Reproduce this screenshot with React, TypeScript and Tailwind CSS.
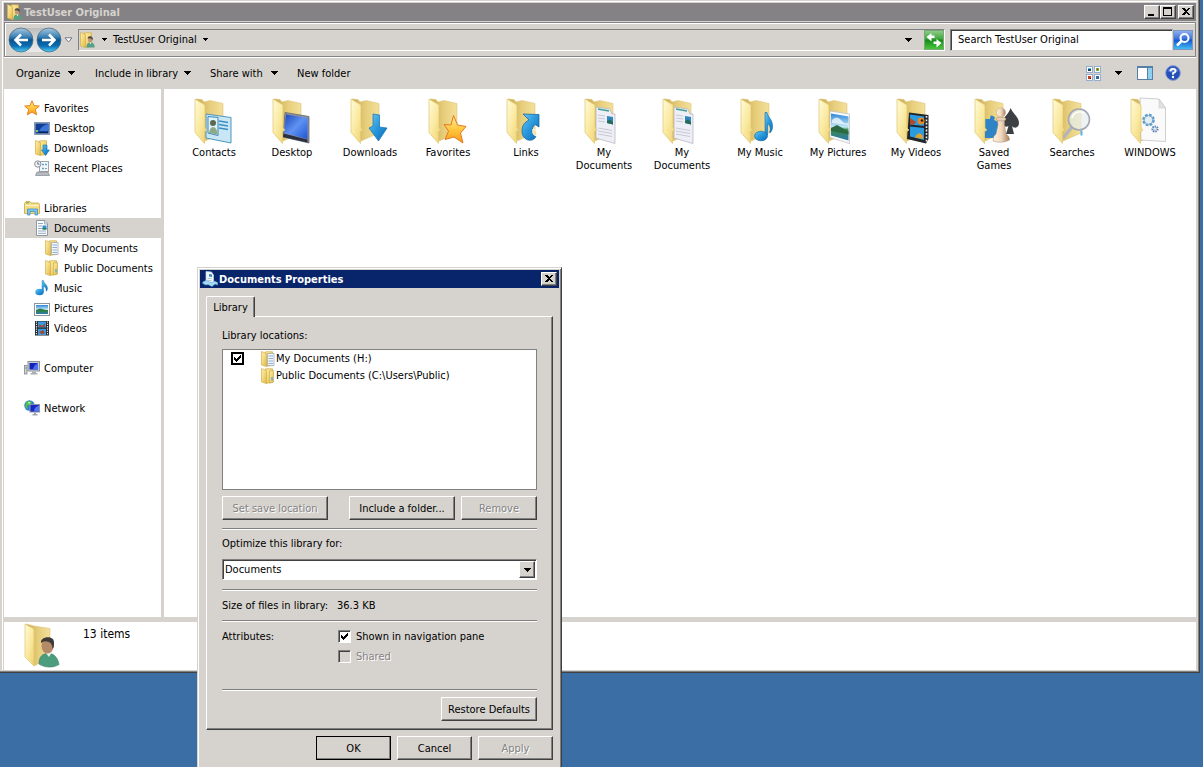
import { useState } from 'react';
import type { ReactNode } from 'react';
import clsx from 'clsx';

/* Gradients shared by all icons */
const IconDefs = () => (
  <svg className="absolute size-0" aria-hidden="true">
    <defs>
      <linearGradient id="flap" x1="0" y1="0" x2="1" y2="1">
        <stop offset="0" stopColor="#fffbd8" />
        <stop offset="0.5" stopColor="#fae9a0" />
        <stop offset="1" stopColor="#efcf6c" />
      </linearGradient>
      <linearGradient id="back" x1="0" y1="0" x2="1" y2="0">
        <stop offset="0" stopColor="#c9a94c" />
        <stop offset="0.5" stopColor="#e6cd7a" />
        <stop offset="1" stopColor="#f4e09a" />
      </linearGradient>
      <linearGradient id="mini" x1="0" y1="0" x2="1" y2="1">
        <stop offset="0" stopColor="#fdf0ae" />
        <stop offset="0.5" stopColor="#f3d77a" />
        <stop offset="1" stopColor="#dfb648" />
      </linearGradient>
      <linearGradient id="blue" x1="0" y1="0" x2="1" y2="1">
        <stop offset="0" stopColor="#6cc8f2" />
        <stop offset="0.5" stopColor="#2796db" />
        <stop offset="1" stopColor="#0f6ab5" />
      </linearGradient>
      <linearGradient id="screen" x1="0" y1="0" x2="1" y2="1">
        <stop offset="0" stopColor="#1c46b8" />
        <stop offset="0.5" stopColor="#5f92f2" />
        <stop offset="1" stopColor="#1d55d6" />
      </linearGradient>
      <linearGradient id="star" x1="0" y1="0" x2="0" y2="1">
        <stop offset="0" stopColor="#fff3a0" />
        <stop offset="0.5" stopColor="#ffc83e" />
        <stop offset="1" stopColor="#f79a1c" />
      </linearGradient>
      <linearGradient id="sky" x1="0" y1="0" x2="0" y2="1">
        <stop offset="0" stopColor="#2f86d8" />
        <stop offset="0.5" stopColor="#c6e8f6" />
        <stop offset="0.6" stopColor="#3c8a4a" />
        <stop offset="1" stopColor="#2a78ae" />
      </linearGradient>
      <linearGradient id="pawn" x1="0" y1="0" x2="1" y2="0">
        <stop offset="0" stopColor="#fff4e2" />
        <stop offset="0.5" stopColor="#f0d8bd" />
        <stop offset="1" stopColor="#a9805c" />
      </linearGradient>
      <linearGradient id="orb" x1="0" y1="0" x2="0" y2="1">
        <stop offset="0" stopColor="#a9c6dc" />
        <stop offset="0.35" stopColor="#3f86b8" />
        <stop offset="0.5" stopColor="#0a548f" />
        <stop offset="0.75" stopColor="#0b6fb4" />
        <stop offset="1" stopColor="#4fd0f4" />
      </linearGradient>
      <linearGradient id="green" x1="0" y1="0" x2="0" y2="1">
        <stop offset="0" stopColor="#8fce8a" />
        <stop offset="0.45" stopColor="#3fa53c" />
        <stop offset="0.5" stopColor="#148a18" />
        <stop offset="1" stopColor="#4fc83e" />
      </linearGradient>
      <linearGradient id="find" x1="0" y1="0" x2="0" y2="1">
        <stop offset="0" stopColor="#8fb4ee" />
        <stop offset="0.45" stopColor="#3a6fdc" />
        <stop offset="0.5" stopColor="#1455cf" />
        <stop offset="1" stopColor="#43c2f5" />
      </linearGradient>
      <linearGradient id="pill" x1="0" y1="0" x2="0" y2="1">
        <stop offset="0" stopColor="#bcbcbc" />
        <stop offset="0.5" stopColor="#d9d9d9" />
        <stop offset="1" stopColor="#e9e9e9" />
      </linearGradient>
    </defs>
  </svg>
);

const FolderIcon = ({ children }: { children?: ReactNode }) => (
  <svg viewBox="-1 -1 48 48" className="size-12 shrink-0 overflow-visible" aria-hidden="true">
    <path d="M5 2 L11 2.500 L13 5 L19 3.500 L32 6.500 V36 L14 44 Z" fill="url(#back)" stroke="#dcc478" strokeWidth=".6" />
    {children}
    <path d="M4 2 L14 8 V31 L16 33 L13.500 34.500 V46.500 L4 35.500 Z" fill="url(#flap)" stroke="#dfc574" strokeWidth=".7" />
  </svg>
);

const Small = ({ children }: { children: ReactNode }) => (
  <svg viewBox="0 0 16 16" className="size-4 shrink-0" aria-hidden="true">{children}</svg>
);

/* Overlays drawn inside the big folders */
const contacts = (
  <g>
    <path d="M15 17 L40 20.500 V46 L15 41 Z" fill="#c9e6f5" stroke="#4f96bd" />
    <path d="M17 19.500 L27 20.500 V38.500 L17 36 Z" fill="#dff2fa" stroke="#3a87b5" />
    <circle cx="22" cy="26" r="3" fill="#5b6a4a" />
    <path d="M18 36 Q19 30 22 30 Q26 30 26.500 37.500 Z" fill="#8fa886" />
    <path d="M28 24 L37 25.500 M28 27.500 L37 29 M28 31 L37 32.500" stroke="#3a8fc4" strokeWidth="1.400" />
  </g>
);

const desktop = (
  <g>
    <path d="M16 15.500 L40 19.500 V46 L14 40 Z" fill="#8e929c" stroke="#63666e" strokeWidth=".8" />
    <path d="M17 17.500 L38.500 21 V42 L15 36 Z" fill="url(#screen)" />
    <path d="M14.500 36.500 L38.500 42.500 V45.500 L14 40 Z" fill="#2b2f42" />
  </g>
);

const downloads = (
  <path d="M26 17 L32.500 18 V30 L40 31 L31.500 44 L22 31 L26 29 Z" fill="url(#blue)" stroke="#1273b8" strokeWidth=".7" />
);

const favorites = (
  <path d="M28.500 18.500 L32.500 28 L41 29.500 L35.500 36 L38 46 L29 40 L20 42.500 L23.500 34 L19 27.500 L26 28 Z" fill="url(#star)" stroke="#e5781b" />
);

const links = (
  <g>
    <path d="M20 17 L36 17.500 V30 L32 27.500 C28 31 28 37 33 39.500 C30 46 19 44 19 34 C19 28 22 25 26 23 Z" fill="url(#blue)" stroke="#0d5f9f" strokeWidth=".7" />
    <path d="M30 32 Q35 34 33.500 39 Q28.500 38 30 32 Z" fill="#f3e09a" stroke="#fff" strokeWidth=".8" />
  </g>
);

const documents = (
  <g>
    <path d="M15 10 L29 12 L31 17 H34 V46.500 L15 41 Z" fill="#eeeef6" stroke="#b0b0bd" strokeWidth=".7" />
    <path d="M17 12 L28 14" stroke="#3f9d90" strokeWidth="1.500" />
    <path d="M17 18 L24 19 M17 21 L24 22 M17 24 L24 25 M17 31 L31 33.500 M17 34 L31 36.500 M17 37 L31 39.500" stroke="#c9c9d6" />
    <path d="M26 19 L32 20 V27.500 L26 26 Z" fill="#2f86bf" />
    <path d="M26 24 L29 22.500 L32 25 V27.500 L26 26 Z" fill="#276b54" />
  </g>
);

const music = (
  <g fill="url(#blue)" stroke="#1168aa" strokeWidth=".6">
    <path d="M28 15.500 H30 C31 20.500 36 22.500 35.500 30.500 C35 34.500 33 36.500 32.500 35.500 C34.500 30.500 32 27.500 30.500 26.500 V38 H28 Z" />
    <ellipse cx="24" cy="39" rx="6.500" ry="4.800" />
  </g>
);

const pictures = (
  <g>
    <path d="M15 14 L34.500 17 V46.500 L15 40.500 Z" fill="#fafafa" stroke="#b9bec4" strokeWidth=".7" />
    <path d="M16 16.500 L33.500 19.500 V43.500 L16 38.500 Z" fill="url(#sky)" />
    <path d="M17 23 Q22 18 26 23 T33 26 V28 L17 26 Z" fill="#edf7fc" opacity=".8" />
    <path d="M16 31 L22 28 L33.500 34.500 V37.500 L16 34 Z" fill="#2b6a43" />
  </g>
);

const videos = (
  <g>
    <path d="M16 15.500 L35.500 18 V42 L33 46.500 L14 42 Z" fill="#20262a" />
    <path d="M17 17.500 L31 19.500 V29 L17 27.500 Z" fill="#2b9be0" />
    <path d="M17 29.500 L31 31 V43 L17 39.500 Z" fill="#2b9be0" />
    <circle cx="28" cy="24" r="3.500" fill="#e5892a" />
    <circle cx="29" cy="23.500" r="1.300" fill="#2d2413" />
    <path d="M17 21 L23 25 L21 27.500 H17 Z" fill="#b24a2a" />
    <path d="M22 40.500 Q26 33 30 39 V42 Z" fill="#e0a02f" />
    <path d="M33.500 19 V44.500" stroke="#e8eef0" strokeWidth="1.600" strokeDasharray="1.8 1.6" />
  </g>
);

const games = (
  <g>
    <path d="M14 22 H19 Q19 17 22 19 Q25 20 23 23 L28 25 V38 L22 41 H14 Z" fill="#2e84c4" />
    <path d="M39.500 11 C42 17 48 20 48 26 C48 31 43 32 41 29 L43 37 L35 37 L37.500 29 C34 31 31 28 32 24 C33 19 38 17 39.500 11 Z" fill="#3c3f44" />
    <path d="M26.500 23 H33.500 V28 L35 37 Q38.500 39 38.500 43 Q31 47 22 44 Q22 39 25 37 L27 28 Z" fill="url(#pawn)" stroke="#a5886d" strokeWidth=".5" />
    <ellipse cx="30" cy="22" rx="5" ry="2" fill="#e9cfb2" stroke="#a5886d" strokeWidth=".5" />
    <circle cx="30" cy="15.500" r="4.500" fill="url(#pawn)" stroke="#b89a7c" strokeWidth=".5" />
  </g>
);

const searches = (
  <g>
    <path d="M22.500 30.500 L15 40" stroke="#b2b5ba" strokeWidth="3.500" strokeLinecap="round" />
    <circle cx="30" cy="22.500" r="10.500" fill="#e6eef0" fillOpacity=".7" stroke="#a2a9b3" strokeWidth="1.600" />
    <path d="M23 21 A8 8 0 0 1 35 16" fill="none" stroke="#fff" strokeWidth="1.500" />
    <path d="M32.500 33.500 V38.500" stroke="#5fb2e6" strokeWidth="2" />
  </g>
);

const system = (
  <g>
    <path d="M13 1 L32 2 L38.500 11 V44.500 L14 43 Z" fill="#fafafa" stroke="#c3c3c6" strokeWidth=".8" />
    <path d="M32 2 V11 H38.500 Z" fill="#dfe2e5" stroke="#c3c3c6" strokeWidth=".5" />
    <circle cx="21.500" cy="23" r="5" fill="#e3edf4" stroke="#5f9bc8" strokeWidth="2.600" strokeDasharray="2.6 1.3" />
    <circle cx="21.500" cy="23" r="4.500" fill="none" stroke="#7aaacd" />
    <circle cx="28" cy="32" r="2.600" fill="#dbe6f0" stroke="#5a81b4" strokeWidth="2" strokeDasharray="1.4 .9" />
  </g>
);

const UserFolder = () => (
  <svg viewBox="0 0 44 48" className="h-12 w-11 shrink-0" aria-hidden="true">
    <path d="M5 2 L13 4 L29 6.500 V36 L13 44 Z" fill="url(#back)" stroke="#dcc478" strokeWidth=".6" />
    <path d="M4 2 L13 7 V44 L4 35 Z" fill="url(#flap)" stroke="#dfc574" strokeWidth=".7" />
    <path d="M18 42 C18 34 22 31.500 27 31.500 C33 31 37 36 38 42.500 C32 46 24 46 18 42 Z" fill="#4c9c7e" stroke="#347c62" strokeWidth=".6" />
    <path d="M24 30 L28 35 L31 30 Z" fill="#e9efe9" />
    <ellipse cx="26.500" cy="24" rx="6" ry="7.500" fill="#b58a66" />
    <path d="M20 21 C19 14 33 13 33 20 C33 24 33 26 31.500 27 C31.500 23 30 21 28 20 Q23 18 20 21 Z" fill="#3f3a38" />
  </svg>
);

/* 16px icons */
const MiniFolder = ({ children }: { children?: ReactNode }) => (
  <Small>
    <path d="M5.500 .8 H12.500 V14.500 L6 15.300 Z" fill="url(#mini)" stroke="#d0aa45" strokeWidth=".7" />
    {children}
    <path d="M1.500 .5 L6.500 2.500 V15.500 L1.500 14 Z" fill="url(#mini)" stroke="#d4b04a" strokeWidth=".7" />
  </Small>
);

const icons = {
  user: (
    <MiniFolder>
      <path d="M7.500 15.500 C7.500 11.500 9 10.500 11.500 10.500 C14.500 10.500 15.500 12.500 15.700 15.500 Z" fill="#54a085" />
      <ellipse cx="11.200" cy="7.600" rx="2.300" ry="3" fill="#c09a76" />
      <path d="M8.700 6.500 C8.500 3.500 14 3.500 13.800 7 L13 8.500 C13 7 12 6 8.700 6.500 Z" fill="#4a4643" />
      <path d="M10.500 10.500 L11.500 12.500 L12.500 10.500 Z" fill="#eef3ee" />
    </MiniFolder>
  ),
  star: (
    <Small>
      <path d="M8 .8 L10 5.600 L15.300 6 L11.300 9.500 L12.700 14.800 L8 12 L3.300 14.800 L4.700 9.500 L.7 6 L6 5.600 Z" fill="url(#star)" stroke="#e8801c" />
    </Small>
  ),
  desktop: (
    <Small>
      <rect x=".5" y="2.500" width="15" height="12" fill="#a3b7cf" stroke="#8a9cb4" />
      <rect x="1.500" y="3.500" width="13" height="10" fill="#123f94" />
      <path d="M5 11 Q8 5 14.500 4 V11 Z" fill="#3d74d8" />
      <path d="M2 10 H4 V12 H2 Z" fill="#7fd05a" />
      <path d="M5 12.500 H14" stroke="#0c2354" />
    </Small>
  ),
  downloads: (
    <MiniFolder>
      <path d="M9 5 H13 V10 H15.500 L11.500 15.500 L7.500 10 H9 Z" fill="url(#blue)" stroke="#1672b8" strokeWidth=".6" />
    </MiniFolder>
  ),
  recent: (
    <Small>
      <rect x="5.500" y="1.500" width="9" height="10" fill="#f4f6f8" stroke="#9fa5ad" />
      <path d="M8 4.500 H10 M11 4.500 H13 M8 8.500 H10" stroke="#55a7db" strokeWidth="1.500" />
      <path d="M11 8.500 H13" stroke="#8c95a0" />
      <path d="M3 12 H14 L15.500 15.500 H1.500 Z" fill="#b7bbc1" stroke="#858b93" strokeWidth=".7" />
      <circle cx="3.800" cy="4" r="3.200" fill="#eef1f4" stroke="#8a929c" />
      <path d="M3.800 2 V4.200 H5.500" fill="none" stroke="#4d5661" strokeWidth=".8" />
    </Small>
  ),
  libraries: (
    <Small>
      <path d="M.5 3.500 L2 1.500 H6 L7 3 H14.500 L15.500 4.500 V13.500 H.5 Z" fill="#f6dc85" stroke="#c9a548" strokeWidth=".8" />
      <path d="M1 5.500 H15" stroke="#fff6c8" />
      <path d="M2 2.800 H5" stroke="#53a650" />
      <path d="M3.500 15 V9 H13.500 V15 H11 V11.500 H6 V15 Z" fill="#7cc5ea" stroke="#3f93c4" strokeWidth=".8" />
    </Small>
  ),
  documents: (
    <Small>
      <path d="M2.500 .5 H11 L13.500 3.500 V15.500 H2.500 Z" fill="#fff" stroke="#8e98a5" />
      <path d="M10.500 .5 V4 H13.500" fill="#dde5ee" stroke="#8e98a5" strokeWidth=".7" />
      <path d="M4 3.500 H9 M4 6 H8 M4 8.500 H8 M4 11 H12 M4 13.300 H12" stroke="#93a7bf" />
      <rect x="8.500" y="5.500" width="4" height="4" fill="#2f8fd0" />
      <rect x="8.500" y="8" width="4" height="1.500" fill="#2f7d58" />
    </Small>
  ),
  myDocuments: (
    <MiniFolder>
      <path d="M7.500 2.500 H14 V14.500 H7.500 Z" fill="#f3f6fa" stroke="#96a2b2" strokeWidth=".7" />
      <path d="M8.500 5 H13 M8.500 7.500 H13 M8.500 10 H13 M8.500 12.500 H13" stroke="#87a5c8" strokeWidth=".9" />
    </MiniFolder>
  ),
  folder: (
    <MiniFolder>
      <path d="M9.500 3 L13.500 2.500 V14 L9.500 15 Z" fill="url(#mini)" stroke="#cfac48" strokeWidth=".7" />
      <path d="M12 9 V12.500" stroke="#58b0e0" strokeWidth="1.500" />
    </MiniFolder>
  ),
  music: (
    <Small>
      <path d="M8 .5 H9.500 C10 4 14 5 13.500 9 C13 11 12 11.500 12 11 C12.500 8 11 7 9.500 6.500 V12 H8 Z" fill="url(#blue)" stroke="#1b76b9" strokeWidth=".4" />
      <ellipse cx="5.500" cy="12" rx="4.200" ry="3.200" fill="url(#blue)" />
    </Small>
  ),
  pictures: (
    <Small>
      <rect x=".5" y="3.500" width="15" height="12" fill="#fff" stroke="#8d949c" />
      <rect x="2" y="5" width="12" height="9" fill="url(#sky)" />
      <path d="M2 10 L6 8.500 L14 10.500 V11.500 H2 Z" fill="#2c7c45" />
    </Small>
  ),
  videos: (
    <Small>
      <rect x="1" y="1" width="14" height="14.500" fill="#20262b" />
      <path d="M4 1.500 H12 V7.500 H4 Z M4 8.800 H12 V15 H4 Z" fill="#3e9ade" />
      <path d="M5 4 L8 6 L11 3 V7 H5 Z M5 12 L9 10 L11 13 L8 14.500 Z" fill="#a04a32" />
      <path d="M2.500 1.500 V15 M13.500 1.500 V15" stroke="#e6eef2" strokeWidth="1.200" strokeDasharray="1.3 1" />
    </Small>
  ),
  computer: (
    <Small>
      <rect x="4" y="1.500" width="11.500" height="9.500" fill="#c9ccd2" stroke="#8f949c" />
      <rect x="5.500" y="3" width="8.500" height="6.500" fill="#1424b8" />
      <path d="M9 9.500 Q9.500 5 14 3 V9.500 Z" fill="#4a6ff0" />
      <path d="M8 11.500 H12 V13 H13.500 V14.500 H6.500 V13 H8 Z" fill="#a9adb4" />
      <rect x=".5" y="5.500" width="2.500" height="8.500" fill="#cfd2d6" stroke="#83888f" strokeWidth=".8" />
      <path d="M1.200 8 H2.500" stroke="#3aa64a" />
    </Small>
  ),
  network: (
    <Small>
      <circle cx="5.500" cy="5.500" r="5.200" fill="#2a7fd4" />
      <path d="M2 2.500 Q5 0 8 2 L6 5 L3 5.500 L4 9 L1 7 Z" fill="#54c33f" />
      <path d="M4 2 L6.500 2.500 L5 4 Z" fill="#d9f3fb" />
      <rect x="6" y="4.500" width="9.500" height="7.500" fill="#1826c4" stroke="#8d93a1" />
      <path d="M10 11.500 Q10 7 15 5.500 V11.500 Z" fill="#4f78f3" />
      <path d="M10 12.500 H12 V14 H13.500 V15.500 H8.500 V14 H10 Z" fill="#a0a4ab" />
    </Small>
  ),
  properties: (
    <Small>
      <path d="M4 .5 L9.500 1 L11.500 4 V12 L4 11 Z" fill="#eef5fb" stroke="#c6d8e8" strokeWidth=".7" />
      <path d="M7 3 L10 3.500 V6 L7 5.500 Z" fill="#3a83bb" />
      <path d="M5.500 7.500 H9.500 M5.500 9.500 H9.500" stroke="#a8bdd3" strokeWidth=".8" />
      <path d="M.8 11 L4 9.500 L10 12 L12 10 L15.500 11.500 V14 L13 13 L10 15.500 L6 13.500 L4 14 L.8 12.500 Z" fill="#a9dbf5" stroke="#5ea8d4" strokeWidth=".6" />
    </Small>
  ),
};

const Arrow = ({ tiny }: { tiny?: boolean }) =>
  tiny ? (
    <svg viewBox="0 0 5 3" className="h-[3px] w-[5px] shrink-0" shapeRendering="crispEdges" aria-hidden="true">
      <path d="M0 0 H5 L3 3 H2 Z" fill="#000" />
    </svg>
  ) : (
    <svg viewBox="0 0 7 4" className="h-1 w-[7px] shrink-0" shapeRendering="crispEdges" aria-hidden="true">
      <path d="M0 0 H7 L4 4 H3 Z" fill="#000" />
    </svg>
  );

const tree: { label: string; icon: ReactNode; level: number; gap?: boolean; active?: boolean }[] = [
  { label: 'Favorites', icon: icons.star, level: 0 },
  { label: 'Desktop', icon: icons.desktop, level: 1 },
  { label: 'Downloads', icon: icons.downloads, level: 1 },
  { label: 'Recent Places', icon: icons.recent, level: 1 },
  { label: 'Libraries', icon: icons.libraries, level: 0, gap: true },
  { label: 'Documents', icon: icons.documents, level: 1, active: true },
  { label: 'My Documents', icon: icons.myDocuments, level: 2 },
  { label: 'Public Documents', icon: icons.folder, level: 2 },
  { label: 'Music', icon: icons.music, level: 1 },
  { label: 'Pictures', icon: icons.pictures, level: 1 },
  { label: 'Videos', icon: icons.videos, level: 1 },
  { label: 'Computer', icon: icons.computer, level: 0, gap: true },
  { label: 'Network', icon: icons.network, level: 0, gap: true },
];

const indents = ['pl-[19px]', 'pl-[29px]', 'pl-[39px]'];

const files = [
  { label: 'Contacts', art: contacts },
  { label: 'Desktop', art: desktop },
  { label: 'Downloads', art: downloads },
  { label: 'Favorites', art: favorites },
  { label: 'Links', art: links },
  { label: 'My Documents', art: documents },
  { label: 'My Documents', art: documents },
  { label: 'My Music', art: music },
  { label: 'My Pictures', art: pictures },
  { label: 'My Videos', art: videos },
  { label: 'Saved Games', art: games },
  { label: 'Searches', art: searches },
  { label: 'WINDOWS', art: system },
];

const raised =
  'border border-t-white border-l-white border-r-[#404040] border-b-[#404040] shadow-[inset_-1px_-1px_0_#808080] bg-[#d6d3ce]';

const CaptionButton = ({ label, children }: { label: string; children: ReactNode }) => (
  <button aria-label={label} className={clsx('flex h-[14px] w-4 items-center justify-center', raised)}>
    <svg viewBox="0 0 12 10" className="h-[10px] w-3" shapeRendering="crispEdges" aria-hidden="true">
      {children}
    </svg>
  </button>
);

const closeGlyph = <path d="M2 1 H4 L6 3 L8 1 H10 L7 4.500 L10 8 H8 L6 6 L4 8 H2 L5 4.500 Z" fill="#000" />;

const DialogButton = ({ children, disabled, primary, className }: { children: ReactNode; disabled?: boolean; primary?: boolean; className?: string }) => (
  <button
    disabled={disabled}
    className={clsx(
      'h-6 whitespace-nowrap',
      raised,
      primary && 'outline-1 -outline-offset-1 outline-black',
      disabled && 'text-[#848284] [text-shadow:1px_1px_0_#fff]',
      className,
    )}
  >
    {children}
  </button>
);

const Check = ({ id, checked, onChange, disabled, bold }: { id: string; checked: boolean; onChange?: () => void; disabled?: boolean; bold?: boolean }) => (
  <span className="grid size-[13px] shrink-0">
    <input
      id={id}
      type="checkbox"
      checked={checked}
      onChange={onChange}
      disabled={disabled}
      className={clsx(
        'col-start-1 row-start-1 size-[13px] appearance-none',
        bold
          ? 'border-2 border-black bg-white'
          : 'border border-t-[#808080] border-l-[#808080] border-r-white border-b-white shadow-[inset_1px_1px_0_#404040]',
        !bold && (disabled ? 'bg-[#d6d3ce]' : 'bg-white'),
      )}
    />
    {checked && (
      <svg viewBox="0 0 13 13" className="pointer-events-none col-start-1 row-start-1 size-[13px]" shapeRendering="crispEdges" aria-hidden="true">
        <path d="M3 5 L5 7 L10 3 V6 L5 10 L3 8 Z" fill="#000" />
      </svg>
    )}
  </span>
);

const Rule = () => <hr className="h-[2px] border-0 border-t border-b border-t-[#808080] border-b-white" />;

const PropertiesDialog = () => {
  const [shown, setShown] = useState(true);
  const [save, setSave] = useState(true);

  return (
    <div
      role="dialog"
      aria-label="Documents Properties"
      className="absolute top-[267px] left-[197px] flex w-[365px] flex-col border border-t-[#d6d3ce] border-l-[#d6d3ce] border-r-[#404040] border-b-[#404040] bg-[#d6d3ce] p-[2px] pb-4 shadow-[inset_1px_1px_0_#fff,inset_-1px_-1px_0_#808080]"
    >
      <div className="flex h-[18px] items-center bg-[#08246b] pr-[2px] pl-[2px] text-white">
        {icons.properties}
        <h2 className="flex-1 pl-[1px] text-[11px] font-bold">Documents Properties</h2>
        <CaptionButton label="Close">{closeGlyph}</CaptionButton>
      </div>

      <div className="flex flex-col px-[6px] pt-2">
        <div role="tablist" className="flex">
          <button
            role="tab"
            aria-selected="true"
            className="relative -mb-px h-[21px] w-[49px] rounded-t-[2px] border border-b-0 border-t-white border-l-white border-r-[#404040] bg-[#d6d3ce] shadow-[inset_-1px_0_0_#808080]"
          >
            Library
          </button>
        </div>

        <div className="flex flex-col border border-t-white border-l-white border-r-[#404040] border-b-[#404040] px-[15px] pt-3 pb-2 shadow-[inset_-1px_-1px_0_#808080]">
          <h3 className="leading-[14px]">Library locations:</h3>
          <ul className="mt-[6px] h-[141px] border border-[#808080] bg-white">
            <li className="flex h-[17px] items-center pl-2">
              <Check id="save" checked={save} onChange={() => setSave(!save)} bold />
              <label htmlFor="save" className="flex items-center pl-4">
                {icons.myDocuments} My Documents (H:)
              </label>
            </li>
            <li className="flex h-[17px] items-center pl-[37px]">
              {icons.folder} Public Documents (C:\Users\Public)
            </li>
          </ul>

          <div className="mt-[6px] flex">
            <DialogButton disabled className="w-[106px]">Set save location</DialogButton>
            <DialogButton className="ml-auto w-[106px]">Include a folder...</DialogButton>
            <DialogButton disabled className="ml-[6px] w-[76px]">Remove</DialogButton>
          </div>

          <div className="mt-2"><Rule /></div>
          <label htmlFor="optimize" className="mt-[7px] leading-[14px]">Optimize this library for:</label>
          <div className="mt-2 flex h-[21px] border border-t-[#808080] border-l-[#808080] border-r-white border-b-white bg-white p-[1px] shadow-[inset_1px_1px_0_#404040]">
            <select id="optimize" className="flex-1 appearance-none bg-transparent pl-[1px]">
              <option>Documents</option>
            </select>
            <span className={clsx('flex w-4 items-center justify-center', raised)}><Arrow /></span>
          </div>
          <div className="mt-[9px]"><Rule /></div>

          <dl className="mt-2 mb-[7px] flex leading-[14px]">
            <dt className="w-[115px]">Size of files in library:</dt>
            <dd>36.3 KB</dd>
          </dl>
          <Rule />

          <div className="mt-2 flex h-[59px] leading-[14px]">
            <span className="w-[116px]">Attributes:</span>
            <div className="flex flex-col gap-[6px]">
              <div className="flex items-start gap-[5px]">
                <Check id="shown" checked={shown} onChange={() => setShown(!shown)} />
                <label htmlFor="shown">Shown in navigation pane</label>
              </div>
              <div className="flex items-start gap-[5px]">
                <Check id="shared" checked={false} disabled />
                <label htmlFor="shared" className="text-[#848284] [text-shadow:1px_1px_0_#fff]">Shared</label>
              </div>
            </div>
          </div>
          <Rule />
          <DialogButton className="mt-[6px] w-24 self-end">Restore Defaults</DialogButton>
        </div>

        <div className="flex justify-end gap-[6px] pt-[6px]">
          <DialogButton primary className="w-[75px]">OK</DialogButton>
          <DialogButton className="w-[75px]">Cancel</DialogButton>
          <DialogButton disabled className="w-[75px]">Apply</DialogButton>
        </div>
      </div>
    </div>
  );
};

const NavBar = () => (
  <div className="flex h-[35px] shrink-0 items-center border border-[#848284] pr-[2px] pl-[3px] shadow-[inset_1px_1px_0_#fff,0_1px_0_#fff]">
    <div className="flex items-center">
      <svg viewBox="0 0 54 26" className="h-[26px] w-[54px]" aria-hidden="true">
        <rect x="0" y="1" width="54" height="24" rx="12" fill="url(#pill)" />
        <g stroke="#4e6d86" strokeWidth=".8" fill="url(#orb)">
          <circle cx="13" cy="13" r="12" />
          <circle cx="41" cy="13" r="12" />
        </g>
        <g fill="none" stroke="#fff" strokeWidth="2.500">
          <path d="M20 13 H8 M13 7.500 L7.500 13 L13 18.500" />
          <path d="M34 13 H46 M41 7.500 L46.500 13 L41 18.500" />
        </g>
      </svg>
      <button aria-label="Recent pages" className="px-[2px]">
        <svg viewBox="0 0 9 6" className="h-[6px] w-[9px]"><path d="M1 .8 H8 L4.500 5 Z" fill="#fff" stroke="#77788c" /></svg>
      </button>
    </div>

    <div className="ml-[3px] flex h-[22px] flex-1 items-center border border-t-[#808080] border-l-[#808080] border-r-white border-b-white">
      <span className="mr-[7px]">{icons.user}</span>
      <Arrow tiny />
      <button className="px-[6px]">TestUser Original</button>
      <Arrow tiny />
      <button aria-label="Previous locations" className="mr-3 ml-auto"><Arrow /></button>
      <button aria-label="Refresh">
        <svg viewBox="0 0 20 20" className="size-5">
          <rect x=".5" y=".5" width="19" height="19" fill="url(#green)" stroke="#78a878" />
          <path d="M2.500 7 L7.500 3 V5.500 H10.500 V8 H7.500 V11.500 Z" fill="#fff" />
          <path d="M17.500 13 L12.500 9 V11.500 H9.500 V14 H12.500 V17.500 Z" fill="#fff" />
        </svg>
      </button>
    </div>

    <input
      aria-label="Search"
      placeholder="Search TestUser Original"
      className="ml-[5px] h-[22px] w-[223px] border border-t-[#808080] border-l-[#808080] border-r-[#d6d3ce] border-b-[#d6d3ce] bg-white px-[7px] shadow-[inset_1px_1px_0_#404040] placeholder:text-black"
    />
    <button aria-label="Start search">
      <svg viewBox="0 0 20 20" className="size-5">
        <rect x=".5" y=".5" width="19" height="19" fill="url(#find)" stroke="#8396bd" />
        <circle cx="11.500" cy="8" r="4" fill="none" stroke="#fff" strokeWidth="2" />
        <path d="M8.500 11 L4 15.500" stroke="#fff" strokeWidth="2.500" />
      </svg>
    </button>
  </div>
);

const Toolbar = () => (
  <div className="flex h-8 shrink-0 items-center pr-[15px] pl-3">
    <button className="flex w-[78px] items-center gap-2">Organize <Arrow /></button>
    <button className="flex w-[116px] items-center gap-[6px] pl-px">Include in library <Arrow /></button>
    <button className="flex w-[87px] items-center gap-2">Share with <Arrow /></button>
    <button>New folder</button>
    <div className="ml-auto flex items-center">
      <button aria-label="Change your view" className="mr-[14px]">
        <svg viewBox="0 0 15 15" className="size-[15px]" shapeRendering="crispEdges">
          <path d="M0 0 H7 V7 H0 Z M8 0 H15 V7 H8 Z M0 8 H7 V15 H0 Z M8 8 H15 V15 H8 Z" fill="#94aed0" />
          <path d="M1 1 H6 V6 H1 Z M9 1 H14 V6 H9 Z M1 9 H6 V14 H1 Z M9 9 H14 V14 H9 Z" fill="#fff" />
          <path d="M2 2 H5 V3 H2 Z" fill="#6cb8dc" />
          <path d="M2 3 H5 V5 H2 Z" fill="#154866" />
          <path d="M10 2 H13 V5 H10 Z" fill="#69b52c" />
          <path d="M11 2 H12 V4 H11 Z M2 10 H5 V13 H2 Z" fill="#d53a18" />
          <path d="M4 12 H5 V13 H4 Z" fill="#3b0b05" />
          <path d="M10 10 H13 V13 H10 Z" fill="#35689c" />
        </svg>
      </button>
      <button aria-label="More options" className="mr-[15px]"><Arrow /></button>
      <button aria-label="Show the preview pane" className="mr-3">
        <svg viewBox="0 0 16 14" className="h-[14px] w-4" shapeRendering="crispEdges">
          <rect width="16" height="14" fill="#577fa8" />
          <rect x="1" y="2" width="9" height="11" fill="#fff" />
          <rect x="11" y="2" width="4" height="11" fill="#8fd0ee" />
        </svg>
      </button>
      <button aria-label="Get help">
        <svg viewBox="0 0 16 16" className="size-4">
          <circle cx="8" cy="8" r="7.400" fill="#2450b8" stroke="#8ea4d2" />
          <path d="M2.500 6 A6 6 0 0 1 13.500 6 Q8 9 2.500 6 Z" fill="#6c90e0" opacity=".7" />
          <path d="M5.500 6.300 Q5.500 3.800 8 3.800 Q10.500 3.800 10.500 6 Q10.500 7.500 8 8.200 V9.800" fill="none" stroke="#fff" strokeWidth="1.800" />
          <circle cx="8" cy="12" r="1.200" fill="#fff" />
        </svg>
      </button>
    </div>
  </div>
);

const App = () => {
  return (
    <div className="relative flex h-screen flex-col overflow-hidden bg-[#3a6ea5] pr-[3px] pb-[94px] font-['DejaVu_Sans_Condensed','DejaVu_Sans',sans-serif] text-[11px] leading-[13px] text-black">
      <IconDefs />
      <main className="flex min-h-0 flex-1 flex-col border-r border-b border-[#404040] bg-[#d6d3ce] px-[2px] pt-[1px] pb-[2px] shadow-[inset_-1px_-1px_0_#808080]">
        <div className="flex min-h-0 flex-1 flex-col border-t border-l border-white pt-[1px] pr-[1px] pl-[1px]">
          <div className="flex h-[18px] shrink-0 items-center bg-[#848284] px-[2px] text-[#d6d3ce]">
            {icons.user}
            <h1 className="flex-1 pl-[2px] text-[11px] font-bold">TestUser Original</h1>
            <CaptionButton label="Minimize"><path d="M2 7 H8 V9 H2 Z" fill="#000" /></CaptionButton>
            <CaptionButton label="Maximize"><path d="M1 0 H10 V9 H1 Z M2 2 V8 H9 V2 Z" fill="#000" fillRule="evenodd" /></CaptionButton>
            <span className="w-[2px]" />
            <CaptionButton label="Close">{closeGlyph}</CaptionButton>
          </div>
          <div className="h-px shrink-0" />
          <NavBar />
          <Toolbar />

          <div className="flex min-h-0 flex-1">
            <nav className="w-[157px] shrink-0 bg-white pt-[9px] pl-px">
              {tree.map((item) => (
                <a
                  key={item.label}
                  href="#"
                  className={clsx(
                    'flex h-5 items-center gap-1 whitespace-nowrap',
                    indents[item.level],
                    item.gap && 'mt-5',
                    item.active && 'bg-[#d6d3ce]',
                  )}
                >
                  {item.icon}
                  {item.label}
                </a>
              ))}
            </nav>
            <ul className="ml-[3px] flex flex-1 flex-wrap content-start bg-white pt-[7px] pl-[11px]">
              {files.map((file, i) => (
                <li key={i} className="flex w-[78px] flex-col items-center">
                  <FolderIcon>{file.art}</FolderIcon>
                  <span className="mt-[2px] max-w-[62px] text-center">{file.label}</span>
                </li>
              ))}
            </ul>
          </div>

          <footer className="mt-[5px] flex h-12 shrink-0 bg-white pl-[17px]">
            <UserFolder />
            <p className="pt-1 pl-[18px] text-[12px] leading-4">13 items</p>
          </footer>
        </div>
      </main>
      <PropertiesDialog />
    </div>
  );
};

export default App;
